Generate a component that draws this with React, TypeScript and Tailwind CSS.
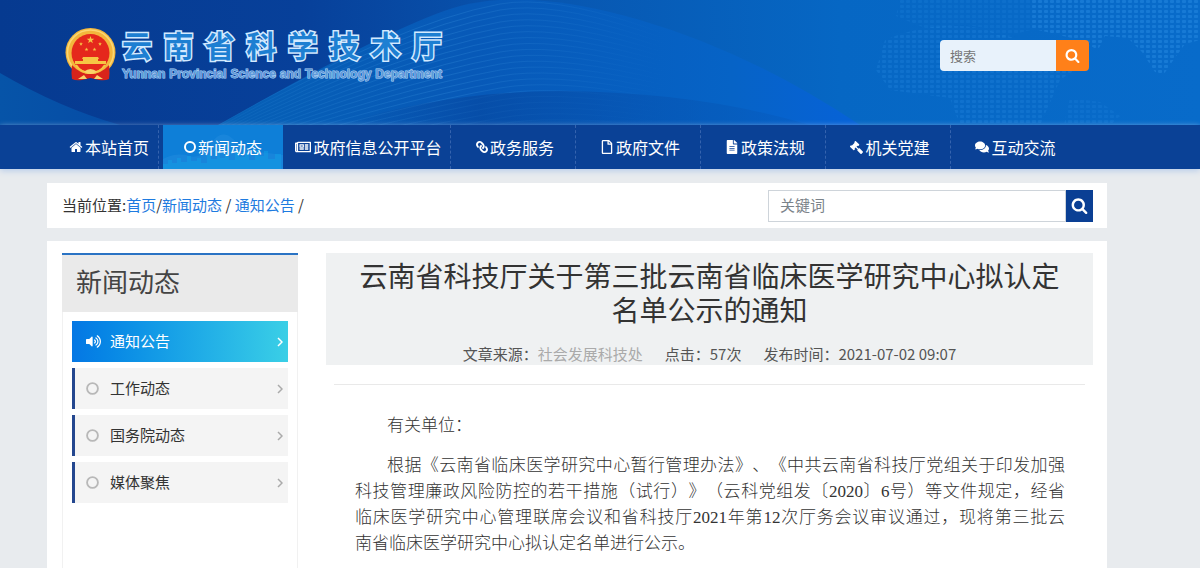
import {
  FaComments,
  FaFileAlt,
  FaGavel,
  FaLink,
  FaRegFile,
  FaRegNewspaper,
  FaVolumeUp,
} from 'react-icons/fa';

type IconProps = { className?: string };

const HomeIcon = ({ className }: IconProps) => (
  <svg viewBox="0 0 1792 1792" fill="currentColor" className={className} aria-hidden="true">
    <path d="M1472 992v480q0 26-19 45t-45 19h-384v-384h-256v384h-384q-26 0-45-19t-19-45v-480q0-1 .5-3t.5-3l575-474 575 474q1 2 1 6zm223-69l-62 74q-8 9-21 11h-3q-13 0-21-7l-692-577-692 577q-12 8-24 7-13-2-21-11l-62-74q-8-10-7-23.5t11-21.5l719-599q32-26 76-26t76 26l244 204v-195q0-14 9-23t23-9h192q14 0 23 9t9 23v408l219 182q10 8 11 21.5t-7 23.5z" />
  </svg>
);

const SearchIcon = ({ className }: IconProps) => (
  <svg viewBox="0 0 1792 1792" fill="currentColor" className={className} aria-hidden="true">
    <path d="M1216 832q0-185-131.5-316.5t-316.5-131.5-316.5 131.5-131.5 316.5 131.5 316.5 316.5 131.5 316.5-131.5 131.5-316.5zm512 832q0 52-38 90t-90 38q-54 0-90-38l-343-342q-179 124-399 124-143 0-273.5-55.5t-225-150-150-225-55.5-273.5 55.5-273.5 150-225 225-150 273.5-55.5 273.5 55.5 225 150 150 225 55.5 273.5q0 220-124 399l343 343q37 37 37 90z" />
  </svg>
);

const CircleIcon = ({ className }: IconProps) => (
  <svg viewBox="0 0 12 12" fill="none" stroke="currentColor" className={className} aria-hidden="true">
    <circle cx="6" cy="6" r="5" />
  </svg>
);

const AngleIcon = ({ className }: IconProps) => (
  <svg viewBox="0 0 6 10" fill="none" stroke="currentColor" strokeWidth="1.5" className={className} aria-hidden="true">
    <path d="M1 1l4 4-4 4" />
  </svg>
);

const star = 'M0-4l.95 2.7 2.85.05-2.3 1.75.85 2.75L0 1.6l-2.35 1.65.85-2.75-2.3-1.75 2.85-.05z';

const Emblem = () => (
  <svg viewBox="0 0 51 53" className="h-[53px] w-[51px] shrink-0" role="img" aria-label="国徽">
    <ellipse cx="25.5" cy="24.5" rx="25" ry="24.5" fill="#f3b63c" />
    <ellipse cx="25.5" cy="24.5" rx="23" ry="22.5" fill="none" stroke="#fbd772" strokeWidth="1.5" />
    <path d="M7 37q-1 8 0 14 4 2 10 1l8.5-2 8.5 2q6 1 10-1 1-6 0-14-8 9-18.500 9T7 37z" fill="#d8231b" />
    <circle cx="25.5" cy="25" r="19" fill="#e5281c" />
    <g fill="#f6c544">
      <path d={star} transform="translate(25.500 12)" />
      <path d={star} transform="translate(16 16) scale(.5)" />
      <path d={star} transform="translate(35 16) scale(.5)" />
      <path d={star} transform="translate(21.500 21.500) scale(.5)" />
      <path d={star} transform="translate(29.500 21.500) scale(.5)" />
      <path d="M18 29h15l1 2h-1v2h8v3H10v-3h8v-2h-1z" />
    </g>
    <path d="M11 37q5 8 14.500 8T40 37" fill="none" stroke="#f6c544" strokeWidth="2" />
    <path d="M19 43.500q6.500-5 13 0-6.500 5-13 0zM13 51l6-4 3 4zM38 51l-6-4-3 4z" fill="#f9d36a" />
  </svg>
);

const waveLines = Array.from({ length: 22 }, (_, i) => i * 6);

const HeaderBackdrop = () => (
  <svg
    viewBox="0 0 1200 125"
    preserveAspectRatio="none"
    className="absolute inset-0 h-full w-full"
    aria-hidden="true"
  >
    <defs>
      <linearGradient id="sky">
        <stop offset="0" stopColor="#063a90" />
        <stop offset=".25" stopColor="#07409a" />
        <stop offset=".45" stopColor="#0856b0" />
        <stop offset=".7" stopColor="#0667c4" />
        <stop offset="1" stopColor="#086bca" />
      </linearGradient>
      <linearGradient id="swoosh">
        <stop offset="0" stopColor="#0660b6" />
        <stop offset=".4" stopColor="#0759b8" />
        <stop offset=".8" stopColor="#0663c6" />
        <stop offset="1" stopColor="#0662d8" />
      </linearGradient>
      <linearGradient id="corner">
        <stop offset="0" stopColor="#0654a8" />
        <stop offset="1" stopColor="#064ca6" />
      </linearGradient>
      <linearGradient id="lower">
        <stop offset="0" stopColor="#06469e" stopOpacity="0" />
        <stop offset=".3" stopColor="#06469e" stopOpacity=".6" />
        <stop offset="1" stopColor="#0658b8" stopOpacity=".3" />
      </linearGradient>
      <linearGradient id="lineFade">
        <stop offset="0" stopColor="#3a95e0" stopOpacity=".1" />
        <stop offset=".35" stopColor="#3a95e0" stopOpacity=".28" />
        <stop offset=".7" stopColor="#3a95e0" stopOpacity="0" />
      </linearGradient>
      <pattern id="dots" width="6" height="5" patternUnits="userSpaceOnUse">
        <rect width="4" height="3" rx="1" fill="#2a8de4" />
      </pattern>
      <clipPath id="swooshClip">
        <path d="M218 125Q400 22 460 6 530-12 640 20T860 125z" />
      </clipPath>
    </defs>
    <rect width="1200" height="125" fill="url(#sky)" />
    <path d="M0 73Q60 108 120 125H0z" fill="url(#corner)" />
    <path d="M218 125Q400 22 460 6 530-12 640 20T860 125z" fill="url(#swoosh)" />
    <g clipPath="url(#swooshClip)" fill="none" stroke="url(#lineFade)">
      {waveLines.map((y) => (
        <path key={y} d={`M218 ${125 + y * 0.4}Q400 ${22 + y} 500 ${4 + y}T860 ${125 + y * 0.3}`} />
      ))}
    </g>
    <path d="M340 125Q440 92 560 91 700 92 810 125z" fill="url(#lower)" />
    <g fill="url(#dots)">
      <path d="M900 0H1030V30L1000 38 985 28 960 24 930 30 896 16z" opacity=".18" />
      <path d="M885 40Q930 20 980 28L1090 60 1060 80 1040 125H960L950 98 890 90 876 70z" opacity=".25" />
      <path d="M1030 0H1200V40L1185 44 1172 62 1164 74 1155 72 1142 52 1128 38 1105 36 1098 50 1080 40 1030 28z" opacity=".45" />
      <path d="M1070 98l30 4 20 14-10 9h-46z" opacity=".18" />
    </g>
  </svg>
);

const Skyline = () => (
  <svg viewBox="0 0 120 44" preserveAspectRatio="none" className="absolute inset-0 h-full w-full" aria-hidden="true">
    <path d="M0 34q14-7 26-3t22-12 22-5 20 12 30 4v14H0z" fill="#2b93e2" fillOpacity=".35" />
    <path
      d="M0 44v-5h5v-4h4v3h5v-5h4v4h6v-6h4v5h6v-3h4v5h6v-8h4v4h6v-7h3v6h5v-4h4v6h6v-9h4v6h6v-4h4v7h6v-10h4v6h5v-5h4v8h7v-5h6v15z"
      fill="#10a0e6"
      fillOpacity=".5"
    />
  </svg>
);

const navItems = [
  { label: '政府信息公开平台', icon: <FaRegNewspaper size={16} />, width: 'w-[168px]' },
  { label: '政务服务', icon: <FaLink size={12} className="-scale-x-100" />, width: 'w-[125px]' },
  { label: '政府文件', icon: <FaRegFile size={14} />, width: 'w-[125px]' },
  { label: '政策法规', icon: <FaFileAlt size={14} />, width: 'w-[125px]' },
  { label: '机关党建', icon: <FaGavel size={13} className="-scale-x-100" />, width: 'w-[125px]' },
  { label: '互动交流', icon: <FaComments size={14} />, width: 'w-[125px]' },
];

const sideItems = ['工作动态', '国务院动态', '媒体聚焦'];

const Header = () => (
  <header className="relative flex h-[125px] items-start justify-between bg-[#07409a] pl-[65px] pr-[111px]">
    <HeaderBackdrop />
    <a href="#" className="relative flex pt-7">
      <Emblem />
      <span className="ml-1.5 block w-80">
        <span className="block text-[30px] leading-8 font-bold text-[#1d7fd2] [-webkit-text-stroke:3px_#d3eaff] [paint-order:stroke_fill] [text-align-last:justify]">
          云南省科学技术厅
        </span>
        <span className="mt-1.5 block font-['Liberation_Sans',sans-serif] text-xs leading-4 font-bold whitespace-nowrap text-[#5e9ada] [-webkit-text-stroke:1px_#b4d6f7] [paint-order:stroke_fill] [text-align-last:justify]">
          Yunnan Provincial Science and Technology Department
        </span>
      </span>
    </a>
    <form className="relative mt-10 flex h-[31px] overflow-hidden rounded" onSubmit={(e) => e.preventDefault()}>
      <input
        type="text"
        aria-label="搜索"
        placeholder="搜索"
        className="w-[116px] bg-[#e8f2fb] px-2.5 text-[13px] outline-none placeholder:text-[#757575]"
      />
      <button type="submit" aria-label="提交搜索" className="flex w-[33px] items-center justify-center bg-[#ff8019] text-white">
        <SearchIcon className="size-[15px]" />
      </button>
    </form>
  </header>
);

const Nav = () => (
  <nav className="relative flex h-11 bg-[#0a4196] pl-[60px] text-base text-white shadow-[0_2px_6px_#b9cdea]">
    <a href="#" className="flex w-[99px] items-center justify-center gap-0.5 border-r border-dashed border-[#3563ae]">
      <HomeIcon className="size-[14px]" />
      本站首页
    </a>
    <a href="#" className="relative ml-1 flex w-[120px] items-center justify-center bg-[#0e7fd8]">
      <Skyline />
      <span className="relative flex items-center gap-0.5">
        <CircleIcon className="size-3 stroke-2" />
        新闻动态
      </span>
    </a>
    {navItems.map((item, index) => (
      <a
        key={item.label}
        href="#"
        className={`${item.width} flex items-center justify-center gap-0.5 border-dashed border-[#3563ae] pl-1 whitespace-nowrap ${
          index < navItems.length - 1 ? 'border-r' : ''
        }`}
      >
        {item.icon}
        {item.label}
      </a>
    ))}
  </nav>
);

const Breadcrumb = () => (
  <div className="flex h-[45px] items-center justify-between bg-white pr-3.5 pl-[15px]">
    <p className="text-[15px] whitespace-pre text-[#333]">
      当前位置:<a href="#" className="text-[#1e7be0]">首页</a>/<a href="#" className="text-[#1e7be0]">新闻动态</a>
      {' / '}
      <a href="#" className="text-[#1e7be0]">通知公告</a>
      {' /'}
    </p>
    <form className="flex h-8" onSubmit={(e) => e.preventDefault()}>
      <input
        type="text"
        aria-label="关键词"
        placeholder="关键词"
        className="w-[298px] border border-[#ced4da] px-[11px] text-[15px] outline-none placeholder:text-[#7b838a]"
      />
      <button type="submit" aria-label="查询" className="flex w-[27px] items-center justify-center bg-[#0a3f94] text-white">
        <SearchIcon className="size-[17px]" />
      </button>
    </form>
  </div>
);

const Sidebar = () => (
  <aside className="w-[236px] shrink-0 border-x border-[#f1f1f1]">
    <h2 className="-mx-px h-[59px] border-t-2 border-[#2a73c4] bg-[#eaeaea] pl-3.5 text-[26px] leading-[52px] text-[#444]">
      新闻动态
    </h2>
    <ul className="flex flex-col gap-1.5 px-[9px] pt-[9px] text-[15px]">
      <li>
        <a
          href="#"
          className="flex h-[41px] items-center bg-linear-to-r from-[#0577e4] to-[#3acfe6] pr-[5px] pl-3.5 text-white"
        >
          <FaVolumeUp size={15} />
          <span className="ml-[9px] flex-1">通知公告</span>
          <AngleIcon className="h-2.5 w-1.5" />
        </a>
      </li>
      {sideItems.map((label) => (
        <li key={label}>
          <a
            href="#"
            className="flex h-[41px] items-center border-l-3 border-[#24478f] bg-[#f4f4f4] pr-[5px] pl-[11px] text-[#333]"
          >
            <CircleIcon className="size-[13px] stroke-[1.7] text-[#b8b8b8]" />
            <span className="ml-[11px] flex-1">{label}</span>
            <AngleIcon className="h-2.5 w-1.5 text-[#aaa]" />
          </a>
        </li>
      ))}
    </ul>
  </aside>
);

const Article = () => (
  <article className="min-w-0 flex-1">
    <div className="h-28 bg-[#eff1f2] px-7 pt-[5px] text-center">
      <h1 className="text-[28px] leading-[34px] text-[#333]">
        云南省科技厅关于第三批云南省临床医学研究中心拟认定名单公示的通知
      </h1>
      <p className="mt-4 flex justify-center gap-[22px] text-[15px] leading-6 text-[#555]">
        <span>
          文章来源：<span className="text-[#aaa]">社会发展科技处</span>
        </span>
        <span>点击：57次</span>
        <span>发布时间：2021-07-02 09:07</span>
      </p>
    </div>
    <hr className="mx-2 mt-[19px] border-[#e9e9e9]" />
    <div className="pt-7 pr-7 pl-[29px] text-justify font-['Liberation_Serif','Noto_Sans_CJK_SC',serif] text-[17px] leading-[26px] font-light text-[#333] [text-spacing-trim:space-all]">
      <p className="indent-8">有关单位：</p>
      <p className="mt-3.5 indent-8">
        根据《云南省临床医学研究中心暂行管理办法》、《中共云南省科技厅党组关于印发加强科技管理廉政风险防控的若干措施（试行）》（云科党组发〔2020〕6号）等文件规定，经省
        <span className="whitespace-nowrap">临床医学</span>
        研究中心管理联席会议和省科技厅2021年第12次厅务会议审议通过，现将第三批云
        <span className="whitespace-nowrap">南省临床</span>
        医学研究中心拟认定名单进行公示。
      </p>
    </div>
  </article>
);

export default function App() {
  return (
    <div
      lang="zh-CN"
      className="flex min-h-screen flex-col bg-[#e8ebee] font-['Noto_Sans_CJK_SC',sans-serif]"
    >
      <Header />
      <Nav />
      <main className="mt-3.5 mr-[93px] ml-[47px] flex flex-1 flex-col gap-[13px]">
        <Breadcrumb />
        <div className="flex flex-1 gap-7 bg-white pt-3 pr-3.5 pl-[15px]">
          <Sidebar />
          <Article />
        </div>
      </main>
    </div>
  );
}
